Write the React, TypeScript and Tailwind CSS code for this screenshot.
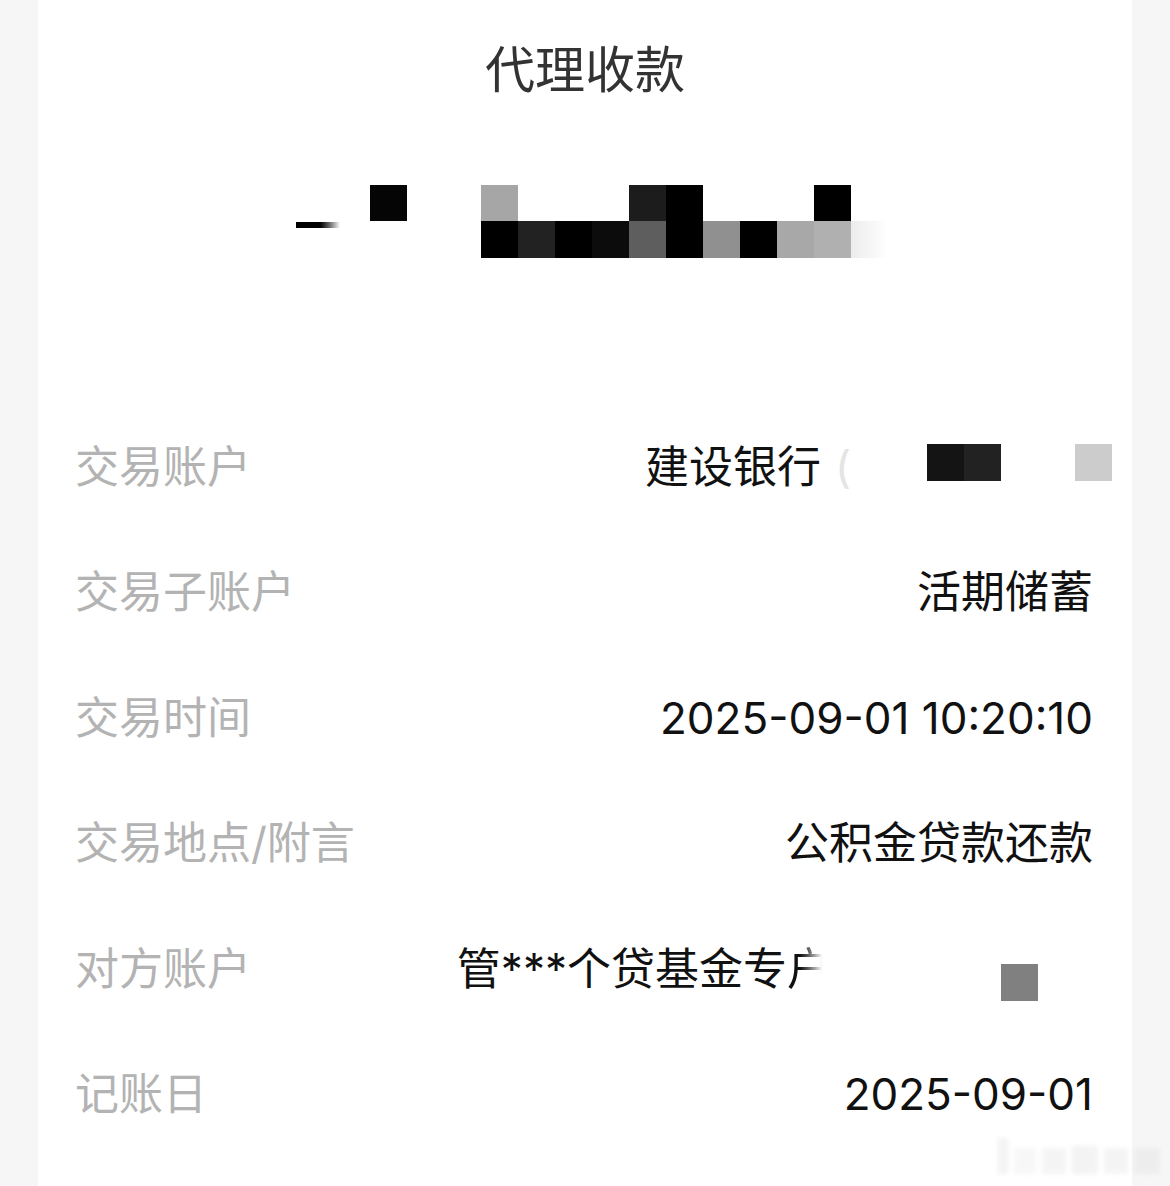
import React from 'react';

const FONT = '"Inter", "Noto Sans CJK SC", sans-serif';

const topRow: Record<number, string> = {
    2: '#050505',
    5: '#a6a6a6',
    9: '#1c1c1c',
    10: '#000000',
    14: '#000000',
};

const bottomRow: Record<number, string> = {
    5: '#000000',
    6: '#222222',
    7: '#000000',
    8: '#0c0c0c',
    9: '#5e5e5e',
    10: '#000000',
    11: '#909090',
    12: '#000000',
    13: '#a8a8a8',
    14: '#b0b0b0',
};

const cols = Array.from({ length: 16 }, (_, i) => i);

function MaskedAmount() {
    return (
        <div className="flex justify-center pl-[14px]">
            <div className="flex flex-col">
                <div className="flex">
                    {cols.map((i) => (
                        <div key={i} className="w-[37px] h-[36px]" style={{ background: topRow[i] ?? 'transparent' }} />
                    ))}
                </div>
                <div className="flex">
                    {cols.map((i) => {
                        if (i === 0) {
                            return (
                                <div key={i} className="w-[37px] h-[37px] pt-[1px]">
                                    <div className="w-[44px] h-[6px] bg-gradient-to-r from-black via-black to-white" />
                                </div>
                            );
                        }
                        if (i === 15) {
                            return <div key={i} className="w-[37px] h-[37px] bg-gradient-to-r from-[#ececec] to-white" />;
                        }
                        return (
                            <div key={i} className="w-[37px] h-[37px]" style={{ background: bottomRow[i] ?? 'transparent' }} />
                        );
                    })}
                </div>
            </div>
        </div>
    );
}

function Row({ label, children }: { label: string; children: React.ReactNode }) {
    return (
        <div className="flex items-center justify-between h-[125.5px] pl-[37px] pr-[39px]">
            <span className="text-[44px] text-[#b3b3b3] whitespace-nowrap">{label}</span>
            <div className="flex items-center text-[44px] text-[#111] whitespace-nowrap">{children}</div>
        </div>
    );
}

export default function App() {
    return (
        <div className="w-[1170px] h-[1186px] bg-[#f6f6f6] overflow-hidden" style={{ fontFamily: FONT }}>
            <div className="relative mx-[38px] h-full bg-white">
                <div className="pt-[40px] text-center text-[50px] leading-[60px] text-[#333]">代理收款</div>
                <div className="mt-[85px]">
                    <MaskedAmount />
                </div>
                <div className="mt-[146px]">
                    <Row label="交易账户">
                        <div className="flex items-center -mr-[19px]">
                            <span>建设银行</span>
                            <span className="ml-[14px] text-[#e4e4e4]">(</span>
                            <div className="ml-[76px] flex -mt-[8px]">
                                <div className="w-[37px] h-[37px] bg-[#141414]" />
                                <div className="w-[37px] h-[37px] bg-[#222]" />
                            </div>
                            <div className="ml-[74px] w-[37px] h-[37px] -mt-[8px] bg-[#cccccc]" />
                        </div>
                    </Row>
                    <Row label="交易子账户">
                        <span>活期储蓄</span>
                    </Row>
                    <Row label="交易时间">
                        <span>2025-09-01 10:20:10</span>
                    </Row>
                    <Row label="交易地点/附言">
                        <span>公积金贷款还款</span>
                    </Row>
                    <Row label="对方账户">
                        <div className="flex items-center">
                            <span>
                                管***个贷基金专
                                <span className="bg-gradient-to-r from-[#111] from-30% to-white to-80% bg-clip-text text-transparent">户</span>
                            </span>
                            <div className="ml-[170px] mr-[55px] mt-[28px] w-[37px] h-[37px] bg-[#808080]" />
                        </div>
                    </Row>
                    <Row label="记账日">
                        <span>2025-09-01</span>
                    </Row>
                </div>
                <div className="absolute right-[-28px] bottom-[12px] flex items-end gap-[6px] opacity-40 blur-[2px]">
                    <div className="w-[10px] h-[36px] bg-[#e2e2e2]" />
                    <div className="w-[22px] h-[26px] bg-[#ececec]" />
                    <div className="w-[24px] h-[26px] bg-[#e6e6e6]" />
                    <div className="w-[26px] h-[28px] bg-[#e2e2e2]" />
                    <div className="w-[24px] h-[26px] bg-[#e6e6e6]" />
                    <div className="w-[26px] h-[26px] bg-[#e2e2e2]" />
                </div>
            </div>
        </div>
    );
}
